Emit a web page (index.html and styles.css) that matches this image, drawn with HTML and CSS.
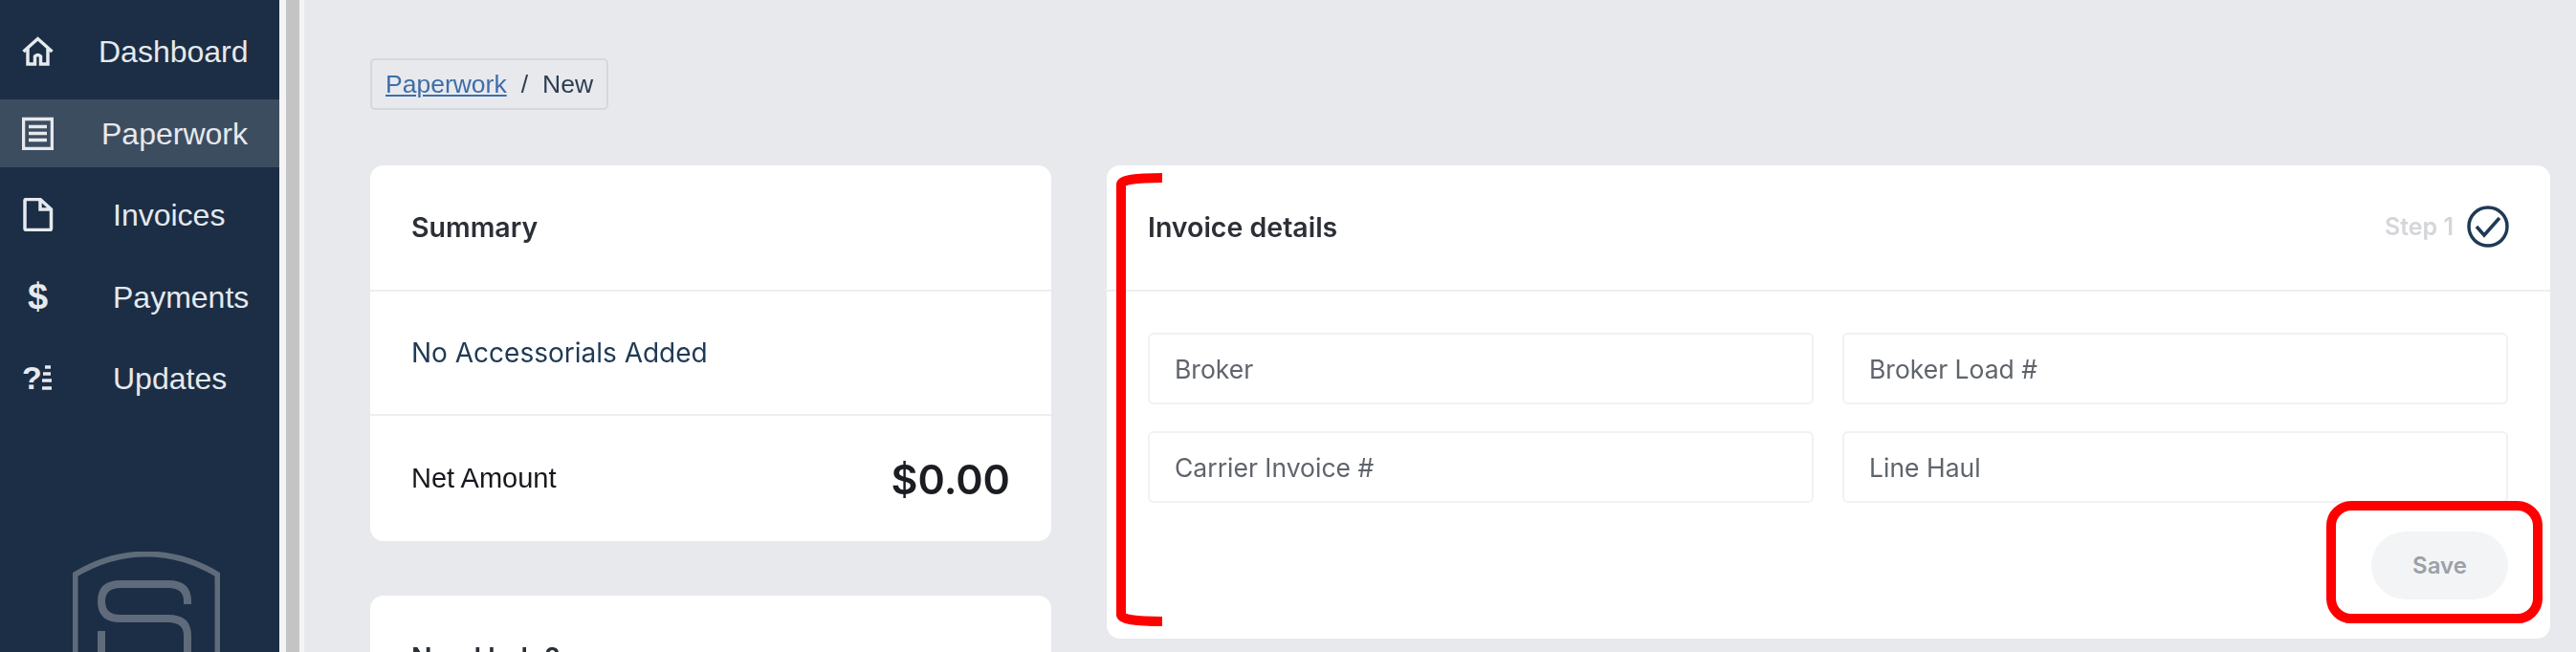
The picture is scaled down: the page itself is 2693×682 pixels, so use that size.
FILE: index.html
```html
<!DOCTYPE html>
<html lang="en">
<head>
    <meta charset="UTF-8">
    <meta name="viewport" content="width=device-width, initial-scale=1.0">
    <title>New Paperwork</title>
    <link rel="stylesheet" href="styles.css">
</head>
<body>
    <div class="app">
        <aside class="sidebar">
            <nav class="nav">
                <a class="nav-item">
                    <svg class="nav-icon" viewBox="0 0 33 33"><path d="M1.500 17 16.500 3.500 31.500 17M6 13.500V30h7.500v-8q3-3 6 0v8H27V13.500"/></svg>
                    <span class="nav-label label-dashboard">Dashboard</span>
                </a>
                <a class="nav-item active">
                    <svg class="nav-icon" viewBox="0 0 33 33"><path d="M1.500 1.500h30v31h-30zM7 9.500h19M7 16.500h19M7 23.500h19"/></svg>
                    <span class="nav-label label-paperwork">Paperwork</span>
                </a>
                <a class="nav-item">
                    <svg class="nav-icon" viewBox="0 0 33 35"><path d="M3 3q0-1.500 1.500-1.500H19L30.500 12v20q0 1.500-1.500 1.500H4.500Q3 33.500 3 32zM19 1.500V12h11.500"/></svg>
                    <span class="nav-label">Invoices</span>
                </a>
                <a class="nav-item">
                    <span class="nav-icon glyph-dollar">$</span>
                    <span class="nav-label">Payments</span>
                </a>
                <a class="nav-item">
                    <span class="nav-icon glyph-help">
                        <span class="help-mark">?</span>
                        <svg class="help-lines" viewBox="0 0 11 27"><path d="M4 2h6M2 9h8M1 16h10M1 24h10"/></svg>
                    </span>
                    <span class="nav-label">Updates</span>
                </a>
            </nav>
            <svg class="logo" viewBox="0 0 154 105">
                <path class="logo-shield" d="M2.500 105V24Q38 2.500 77 2.500T151.500 24v81"/>
                <path d="M120 55V52Q120 34 100 34H50Q30 34 30 52V52Q30 70 50 70H100Q120 70 120 88V115M30 83V115"/>
            </svg>
        </aside>
        <div class="scrollbar"><div class="scrollbar-thumb"></div></div>
        <main class="main">
            <div class="breadcrumb">
                <a class="crumb-link">Paperwork</a>
                <span class="crumb-sep">/</span>
                <span>New</span>
            </div>
            <div class="columns">
                <div class="column">
                    <section class="card">
                        <header class="card-header"><h2>Summary</h2></header>
                        <div class="summary-row no-items">No Accessorials Added</div>
                        <div class="summary-row total">
                            <span class="total-label">Net Amount</span>
                            <span class="total-value">$0.00</span>
                        </div>
                    </section>
                    <section class="card">
                        <header class="card-header"><h2>Need help?</h2></header>
                    </section>
                </div>
                <section class="card invoice-card">
                    <header class="card-header">
                        <h2>Invoice details</h2>
                        <div class="step">
                            <span>Step 1</span>
                            <svg class="step-check" viewBox="0 0 44 44"><circle cx="22" cy="22" r="20"/><path d="M10 22l8 9 16-18"/></svg>
                        </div>
                    </header>
                    <form class="invoice-form">
                        <div class="fields">
                            <input class="field" type="text" placeholder="Broker">
                            <input class="field" type="text" placeholder="Broker Load #">
                            <input class="field" type="text" placeholder="Carrier Invoice #">
                            <input class="field" type="text" placeholder="Line Haul">
                        </div>
                        <div class="actions">
                            <button class="save" type="button" disabled>Save</button>
                        </div>
                    </form>
                </section>
            </div>
        </main>
    </div>

    <!-- red annotations drawn on top of the screenshot -->
    <svg class="mark-bracket" viewBox="0 0 48 474"><path d="M48 5Q5 5 5 12V462Q5 469 48 469"/></svg>
    <div class="mark-box"></div>
</body>
</html>
```

FILE: styles.css
```css
* {
    box-sizing: border-box;
}

html,
body {
    height: 100%;
}

body {
    margin: 0;
    overflow: hidden;
    background-color: #e8e9ed;
    font-family: Inter, "Liberation Sans", sans-serif;
    color: #1f2937;
}

.app {
    display: flex;
    height: 682px;
    filter: blur(0.7px);
}

/* Sidebar */
.sidebar {
    flex: 0 0 292px;
    height: 682px;
    overflow: hidden;
    background-color: #1b2e45;
}

.nav {
    display: flex;
    flex-direction: column;
    gap: 14.5px;
    padding-top: 18px;
}

.nav-item {
    display: flex;
    align-items: center;
    height: 71px;
    padding-left: 23px;
    color: #e6e9ee;
    font-family: "Liberation Sans", Arial, sans-serif;
    font-size: 32px;
}

.nav-item.active {
    background-color: #3d4d60;
}

.nav-icon {
    flex: 0 0 33px;
    width: 33px;
    height: 35px;
    fill: none;
    stroke: #e6e9ee;
    stroke-width: 3.5;
}

.nav-label {
    margin-left: 62px;
    padding-top: 2px;
}

.label-dashboard {
    margin-left: 47px;
}

.label-paperwork {
    margin-left: 50px;
}

.glyph-dollar {
    font-size: 38px;
    font-weight: bold;
    line-height: 35px;
    text-align: center;
}

.glyph-help {
    display: flex;
    align-items: center;
    font-size: 34px;
    font-weight: bold;
    line-height: 35px;
}

.help-mark {
    width: 20px;
}

.help-lines {
    width: 11px;
    height: 27px;
    fill: none;
    stroke: #e6e9ee;
    stroke-width: 3.5;
}

.logo {
    display: block;
    width: 154px;
    height: 105px;
    margin: 146px 0 0 76px;
    fill: none;
    stroke: #5f6b7a;
    stroke-width: 8;
}

.logo .logo-shield {
    stroke-width: 6;
}

/* Scrollbar strip between the sidebar and the content */
.scrollbar {
    flex: 0 0 26px;
    padding-left: 7px;
    background-color: #f4f4f5;
}

.scrollbar-thumb {
    width: 14px;
    height: 100%;
    background-color: #c4c4c4;
}

/* Content */
.main {
    flex: 1;
    min-width: 0;
    padding: 61px 27px 0 69px;
}

.breadcrumb {
    display: inline-flex;
    align-items: center;
    gap: 15px;
    height: 54px;
    padding: 0 14px;
    border: 2px solid #d5d7dc;
    border-radius: 5px;
    font-family: "Liberation Sans", Arial, sans-serif;
    font-size: 26.5px;
    color: #2c3e50;
}

.crumb-link {
    color: #3d6ea8;
    text-decoration: underline;
}

.columns {
    display: grid;
    grid-template-columns: 712px 1509px;
    gap: 58px;
    margin-top: 58px;
}

.column {
    display: flex;
    flex-direction: column;
    gap: 57px;
}

.card {
    border-radius: 14px;
    background-color: #fff;
}

.invoice-card {
    align-self: start;
}

.card-header {
    display: flex;
    align-items: center;
    justify-content: space-between;
    height: 132px;
    padding: 0 43px 2px;
    border-bottom: 2px solid #eceef0;
}

.card-header h2 {
    margin: 0;
    font-size: 28.5px;
    font-weight: 600;
    color: #2b2f36;
}

.summary-row {
    display: flex;
    align-items: center;
    justify-content: space-between;
    height: 130px;
    padding: 0 43px;
}

.no-items {
    border-bottom: 2px solid #eceef0;
    font-size: 28px;
    color: #1f3a55;
}

.total {
    height: 131px;
}

.total-label {
    font-family: "Liberation Sans", Arial, sans-serif;
    font-size: 29px;
    color: #16181d;
}

.total-value {
    font-size: 43px;
    font-weight: 600;
    color: #1b1d22;
}

.step {
    display: flex;
    align-items: center;
    gap: 14px;
    font-size: 25px;
    font-weight: 600;
    color: #d4d6da;
}

.step-check {
    width: 44px;
    height: 44px;
    fill: none;
    stroke: #1f3a55;
    stroke-width: 3.5;
}

.invoice-form {
    padding: 43px 44px 41px 43px;
}

.fields {
    display: grid;
    grid-template-columns: 1fr 1fr;
    gap: 28px 30px;
}

.field {
    width: 100%;
    height: 75px;
    padding: 0 26px;
    border: 2px solid #f0f1f3;
    border-radius: 6px;
    background-color: #fff;
    font-family: Inter, "Liberation Sans", sans-serif;
    font-size: 26.5px;
}

.field::placeholder {
    color: #5f646c;
    opacity: 1;
}

.actions {
    display: flex;
    justify-content: flex-end;
    margin-top: 30px;
}

.save {
    width: 143px;
    height: 71px;
    border: none;
    border-radius: 36px;
    background-color: #f3f4f6;
    font-family: Inter, "Liberation Sans", sans-serif;
    font-size: 24px;
    font-weight: 600;
    color: #9ca0a6;
}

/* Annotations */
.mark-bracket {
    position: absolute;
    left: 1167px;
    top: 181px;
    width: 48px;
    height: 474px;
    fill: none;
    stroke: #f00;
    stroke-width: 10;
}

.mark-box {
    position: absolute;
    left: 2432px;
    top: 524px;
    width: 226px;
    height: 128px;
    border: 10px solid #f00;
    border-radius: 26px;
}
```
